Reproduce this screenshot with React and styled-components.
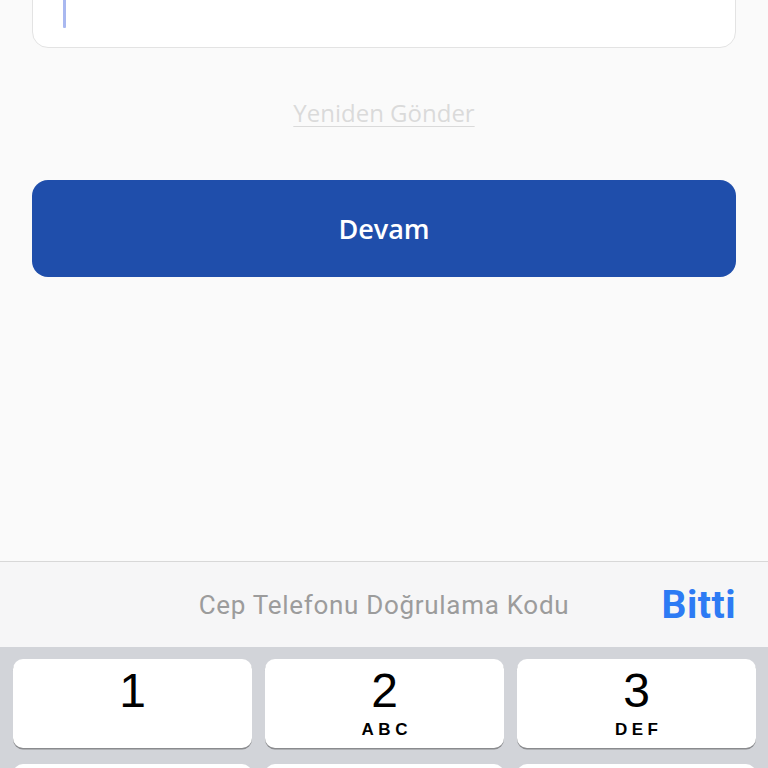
import styled, { createGlobalStyle } from "styled-components";

const GlobalStyle = createGlobalStyle`
html, body {
    margin: 0;
    padding: 0;
    background: #fafafa;
    overflow: hidden;
}
* {
    box-sizing: border-box;
}
`

const Page = styled.div`
height: 768px;
overflow: hidden;
display: flex;
flex-direction: column;
font-family: "Open Sans", "Noto Sans", sans-serif;
`
const Content = styled.div`
flex: 1;
padding: 0 32px;
display: flex;
flex-direction: column;
`
const CodeInput = styled.div`
margin-top: -16px;
height: 64px;
background: #fff;
border: 1.5px solid #e3e3e3;
border-radius: 16px;
padding-left: 30px;
display: flex;
align-items: flex-start;
`
const Caret = styled.span`
display: block;
width: 3px;
height: 43px;
background: #a9b8f0;
border-radius: 1px;
`
const Resend = styled.a`
align-self: center;
margin-top: 50px;
font-size: 24px;
line-height: 30px;
color: #dadada;
text-decoration: underline;
text-underline-offset: 4px;
text-decoration-thickness: 1px;
`
const Button = styled.button`
margin-top: 52px;
height: 97px;
width: 100%;
border: none;
border-radius: 16px;
background: #1f4eab;
color: #fff;
font-family: "Open Sans", "Noto Sans", sans-serif;
font-weight: 600;
font-size: 27px;
`
const Toolbar = styled.div`
flex: none;
height: 86px;
border-top: 1px solid #d8d8d8;
background: #f6f6f7;
display: grid;
grid-template-columns: 1fr auto 1fr;
align-items: center;
font-family: Roboto, "Liberation Sans", sans-serif;
`
const Hint = styled.span`
grid-column: 2;
font-size: 26px;
letter-spacing: 0.7px;
color: #9c9c9c;
`
const Done = styled.span`
justify-self: end;
padding-right: 32px;
font-size: 39px;
font-weight: 700;
color: #2d7bf4;
letter-spacing: 0.5px;
`
const Keyboard = styled.div`
flex: none;
height: 121px;
overflow: hidden;
background: #d2d4d9;
padding: 12px 12px 0 13px;
display: grid;
grid-template-columns: repeat(3, 1fr);
column-gap: 13px;
row-gap: 16px;
align-content: start;
`
const Key = styled.div`
height: 89px;
background: #fff;
border-radius: 10px;
box-shadow: 0 1.5px 0 #8a8b8e;
display: flex;
flex-direction: column;
align-items: center;
padding-top: 8px;
font-family: "Liberation Sans", Arial, sans-serif;
color: #000;
`
const Digit = styled.span`
font-size: 48px;
line-height: 48px;
`
const Letters = styled.span`
margin-top: 5px;
font-size: 17px;
font-weight: 700;
letter-spacing: 4.5px;
margin-right: -4.5px;
line-height: 20px;
`

const keys = [
    { digit: "1", letters: "" },
    { digit: "2", letters: "ABC" },
    { digit: "3", letters: "DEF" }
]

export default function App() {
    return (
        <Page>
            <GlobalStyle />
            <Content>
                <CodeInput>
                    <Caret />
                </CodeInput>
                <Resend>Yeniden Gönder</Resend>
                <Button>Devam</Button>
            </Content>
            <Toolbar>
                <Hint>Cep Telefonu Doğrulama Kodu</Hint>
                <Done>Bitti</Done>
            </Toolbar>
            <Keyboard>
                {keys.map((k) => (
                    <Key key={k.digit}>
                        <Digit>{k.digit}</Digit>
                        {k.letters && <Letters>{k.letters}</Letters>}
                    </Key>
                ))}
                {/* next row only peeks in at the bottom edge */}
                <Key />
                <Key />
                <Key />
            </Keyboard>
        </Page>
    )
}
